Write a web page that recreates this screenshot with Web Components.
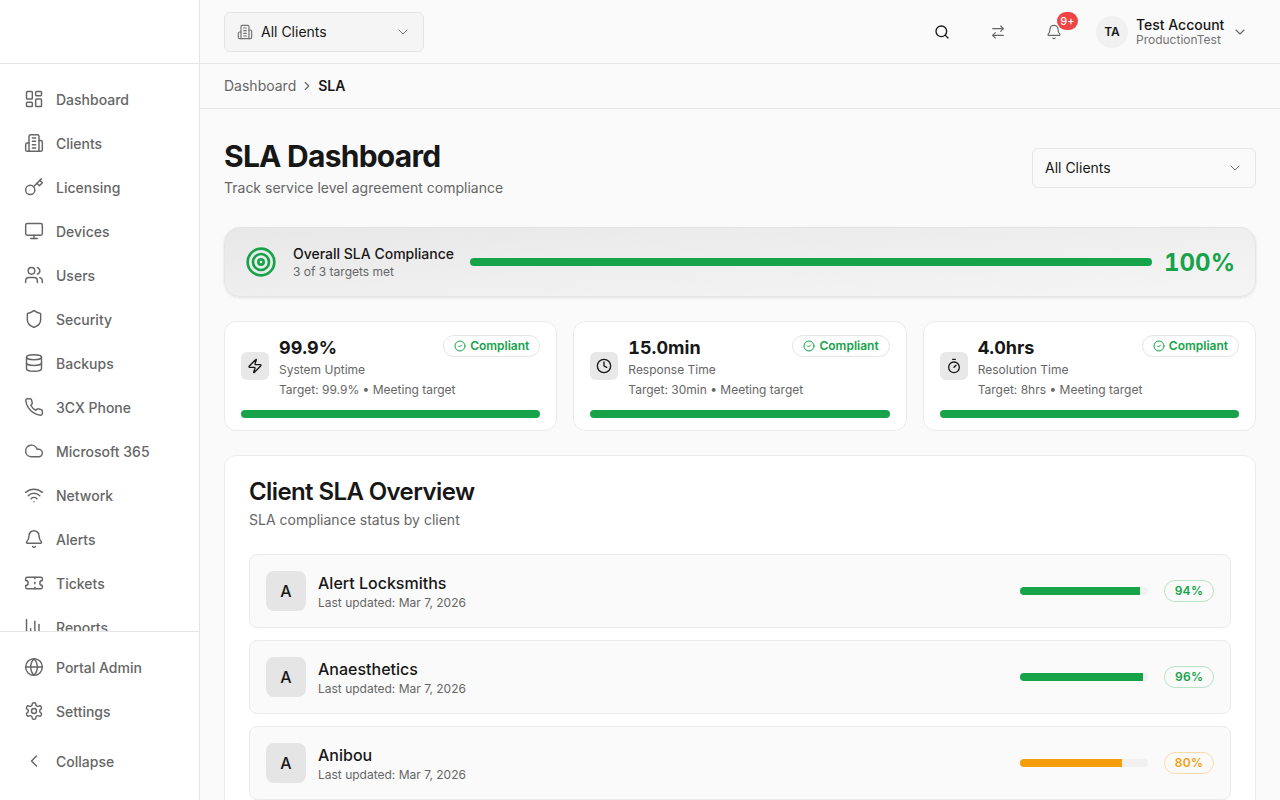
<!DOCTYPE html>
<html lang="en">
<head>
<meta charset="utf-8">
<title>SLA Dashboard</title>
<style>
  html, body { margin: 0; height: 100%; overflow: hidden; }
  body { font-family: Inter, "Liberation Sans", sans-serif; background: #fafafa; color: #171717; }
</style>
</head>
<body>
<app-shell>
  <app-sidebar slot="sidebar">
    <nav-item icon="dashboard">Dashboard</nav-item>
    <nav-item icon="building">Clients</nav-item>
    <nav-item icon="key">Licensing</nav-item>
    <nav-item icon="monitor">Devices</nav-item>
    <nav-item icon="users">Users</nav-item>
    <nav-item icon="shield">Security</nav-item>
    <nav-item icon="database">Backups</nav-item>
    <nav-item icon="phone">3CX Phone</nav-item>
    <nav-item icon="cloud">Microsoft 365</nav-item>
    <nav-item icon="wifi">Network</nav-item>
    <nav-item icon="bell">Alerts</nav-item>
    <nav-item icon="ticket">Tickets</nav-item>
    <nav-item icon="chart">Reports</nav-item>
    <nav-item slot="footer" icon="globe">Portal Admin</nav-item>
    <nav-item slot="footer" icon="settings">Settings</nav-item>
    <nav-item slot="collapse" icon="chevron-left">Collapse</nav-item>
  </app-sidebar>
  <app-topbar slot="topbar"></app-topbar>
  <app-breadcrumb slot="topbar"></app-breadcrumb>
  <page-header>
    <span slot="title">SLA Dashboard</span>
    <span slot="subtitle">Track service level agreement compliance</span>
  </page-header>
  <sla-summary title="Overall SLA Compliance" sub="3 of 3 targets met" value="100%"></sla-summary>
  <metric-grid>
    <metric-card icon="zap" value="99.9%" label="System Uptime" target="Target: 99.9% • Meeting target"></metric-card>
    <metric-card icon="clock" value="15.0min" label="Response Time" target="Target: 30min • Meeting target"></metric-card>
    <metric-card icon="timer" value="4.0hrs" label="Resolution Time" target="Target: 8hrs • Meeting target"></metric-card>
  </metric-grid>
  <client-overview>
    <client-row name="Alert Locksmiths" updated="Last updated: Mar 7, 2026" pct="94"></client-row>
    <client-row name="Anaesthetics" updated="Last updated: Mar 7, 2026" pct="96"></client-row>
    <client-row name="Anibou" updated="Last updated: Mar 7, 2026" pct="80"></client-row>
  </client-overview>
</app-shell>

<script>
const ICONS = {
  dashboard: '<rect width="7" height="9" x="3" y="3" rx="1"/><rect width="7" height="5" x="14" y="3" rx="1"/><rect width="7" height="9" x="14" y="12" rx="1"/><rect width="7" height="5" x="3" y="16" rx="1"/>',
  building: '<path d="M6 22V4a2 2 0 0 1 2-2h8a2 2 0 0 1 2 2v18Z"/><path d="M6 12H4a2 2 0 0 0-2 2v6a2 2 0 0 0 2 2h2"/><path d="M18 9h2a2 2 0 0 1 2 2v9a2 2 0 0 1-2 2h-2"/><path d="M10 6h4"/><path d="M10 10h4"/><path d="M10 14h4"/><path d="M10 18h4"/>',
  key: '<circle cx="7.5" cy="15.5" r="5.5"/><path d="m21 2-9.6 9.6"/><path d="m15.5 7.5 3 3L22 7l-3-3"/>',
  monitor: '<rect width="20" height="14" x="2" y="3" rx="2"/><line x1="8" x2="16" y1="21" y2="21"/><line x1="12" x2="12" y1="17" y2="21"/>',
  users: '<path d="M16 21v-2a4 4 0 0 0-4-4H6a4 4 0 0 0-4 4v2"/><circle cx="9" cy="7" r="4"/><path d="M22 21v-2a4 4 0 0 0-3-3.87"/><path d="M16 3.13a4 4 0 0 1 0 7.75"/>',
  shield: '<path d="M20 13c0 5-3.5 7.5-7.66 8.95a1 1 0 0 1-.67-.01C7.5 20.5 4 18 4 13V6a1 1 0 0 1 1-1c2 0 4.5-1.2 6.24-2.72a1.17 1.17 0 0 1 1.52 0C14.51 3.81 17 5 19 5a1 1 0 0 1 1 1z"/>',
  database: '<ellipse cx="12" cy="5" rx="9" ry="3"/><path d="M3 5V19A9 3 0 0 0 21 19V5"/><path d="M3 12A9 3 0 0 0 21 12"/>',
  phone: '<path d="M22 16.92v3a2 2 0 0 1-2.18 2 19.79 19.79 0 0 1-8.63-3.07 19.5 19.5 0 0 1-6-6 19.79 19.79 0 0 1-3.07-8.67A2 2 0 0 1 4.11 2h3a2 2 0 0 1 2 1.72 12.84 12.84 0 0 0 .7 2.81 2 2 0 0 1-.45 2.11L8.09 9.91a16 16 0 0 0 6 6l1.27-1.27a2 2 0 0 1 2.11-.45 12.84 12.84 0 0 0 2.81.7A2 2 0 0 1 22 16.92z"/>',
  cloud: '<path d="M17.5 19H9a7 7 0 1 1 6.71-9h1.79a4.5 4.5 0 1 1 0 9Z"/>',
  wifi: '<path d="M12 20h.01"/><path d="M2 8.82a15 15 0 0 1 20 0"/><path d="M5 12.859a10 10 0 0 1 14 0"/><path d="M8.5 16.429a5 5 0 0 1 7 0"/>',
  bell: '<path d="M10.268 21a2 2 0 0 0 3.464 0"/><path d="M3.262 15.326A1 1 0 0 0 4 17h16a1 1 0 0 0 .74-1.673C19.41 13.956 18 12.499 18 8A6 6 0 0 0 6 8c0 4.499-1.411 5.956-2.738 7.326"/>',
  ticket: '<path d="M2 9a3 3 0 0 1 0 6v2a2 2 0 0 0 2 2h16a2 2 0 0 0 2-2v-2a3 3 0 0 1 0-6V7a2 2 0 0 0-2-2H4a2 2 0 0 0-2 2Z"/><path d="M13 5v2"/><path d="M13 17v2"/><path d="M13 11v2"/>',
  chart: '<path d="M3 3v16a2 2 0 0 0 2 2h16"/><path d="M18 17V9"/><path d="M13 17V5"/><path d="M8 17v-3"/>',
  globe: '<circle cx="12" cy="12" r="10"/><path d="M12 2a14.5 14.5 0 0 0 0 20 14.5 14.5 0 0 0 0-20"/><path d="M2 12h20"/>',
  settings: '<path d="M12.22 2h-.44a2 2 0 0 0-2 2v.18a2 2 0 0 1-1 1.73l-.43.25a2 2 0 0 1-2 0l-.15-.08a2 2 0 0 0-2.73.73l-.22.38a2 2 0 0 0 .73 2.73l.15.1a2 2 0 0 1 1 1.72v.51a2 2 0 0 1-1 1.74l-.15.09a2 2 0 0 0-.73 2.73l.22.38a2 2 0 0 0 2.73.73l.15-.08a2 2 0 0 1 2 0l.43.25a2 2 0 0 1 1 1.73V20a2 2 0 0 0 2 2h.44a2 2 0 0 0 2-2v-.18a2 2 0 0 1 1-1.73l.43-.25a2 2 0 0 1 2 0l.15.08a2 2 0 0 0 2.73-.73l.22-.39a2 2 0 0 0-.73-2.73l-.15-.08a2 2 0 0 1-1-1.74v-.5a2 2 0 0 1 1-1.74l.15-.09a2 2 0 0 0 .73-2.73l-.22-.38a2 2 0 0 0-2.73-.73l-.15.08a2 2 0 0 1-2 0l-.43-.25a2 2 0 0 1-1-1.73V4a2 2 0 0 0-2-2z"/><circle cx="12" cy="12" r="3"/>',
  'chevron-left': '<path d="m15 18-6-6 6-6"/>',
  'chevron-right': '<path d="m9 18 6-6-6-6"/>',
  'chevron-down': '<path d="m6 9 6 6 6-6"/>',
  search: '<circle cx="11" cy="11" r="8"/><path d="m21 21-4.3-4.3"/>',
  swap: '<path d="m16 3 4 4-4 4"/><path d="M20 7H4"/><path d="m8 21-4-4 4-4"/><path d="M4 17h16"/>',
  target: '<circle cx="12" cy="12" r="10"/><circle cx="12" cy="12" r="6"/><circle cx="12" cy="12" r="2"/>',
  zap: '<path d="M4 14a1 1 0 0 1-.78-1.63l9.9-10.2a.5.5 0 0 1 .86.46l-1.92 6.02A1 1 0 0 0 13 10h7a1 1 0 0 1 .78 1.63l-9.9 10.2a.5.5 0 0 1-.86-.46l1.92-6.02A1 1 0 0 0 11 14z"/>',
  clock: '<circle cx="12" cy="12" r="10"/><polyline points="12 6 12 12 16 14"/>',
  timer: '<line x1="10" x2="14" y1="2" y2="2"/><line x1="12" x2="15" y1="14" y2="11"/><circle cx="12" cy="14" r="8"/>',
  check: '<circle cx="12" cy="12" r="10"/><path d="m9 12 2 2 4-4"/>'
};

class UiIcon extends HTMLElement {
  connectedCallback() {
    const size = this.getAttribute("size") || 20;
    if (!this.shadowRoot) this.attachShadow({mode: "open"});
    this.shadowRoot.innerHTML = `
      <style>
        :host { display: inline-flex; flex: none; width: ${size}px; height: ${size}px; }
        svg { display: block; }
      </style>
      <svg xmlns="http://www.w3.org/2000/svg" width="${size}" height="${size}" viewBox="0 0 24 24" fill="none"
        stroke="currentColor" stroke-width="${this.getAttribute("stroke") || 2}" stroke-linecap="round" stroke-linejoin="round">${ICONS[this.getAttribute("name")]}</svg>`;
  }
}
customElements.define("ui-icon", UiIcon);

class AppShell extends HTMLElement {
  constructor() {
    super();
    this.attachShadow({mode: "open"}).innerHTML = `
      <style>
        :host { display: flex; height: 800px; overflow: hidden; }
        .main { flex: 1; min-width: 0; display: flex; flex-direction: column; }
        .content { flex: 1; min-height: 0; overflow: hidden; padding: 29px 24px 24px; display: flex; flex-direction: column; gap: 24px; }
        ::slotted(page-header) { margin-bottom: 5px; }
      </style>
      <slot name="sidebar"></slot>
      <div class="main">
        <slot name="topbar"></slot>
        <div class="content"><slot></slot></div>
      </div>`;
  }
}
customElements.define("app-shell", AppShell);

class AppSidebar extends HTMLElement {
  constructor() {
    super();
    this.attachShadow({mode: "open"}).innerHTML = `
      <style>
        :host { display: flex; flex-direction: column; flex: none; box-sizing: border-box; width: 200px; height: 800px; background: #fff; border-right: 1px solid #e5e5e5; }
        .logo { flex: none; height: 63px; border-bottom: 1px solid #e5e5e5; }
        nav { flex: 1; min-height: 0; overflow: hidden; padding: 17px 0 0; display: flex; flex-direction: column; gap: 8px; }
        .foot { flex: none; border-top: 1px solid #e5e5e5; padding: 17px 0 21px; display: flex; flex-direction: column; gap: 8px; }
        .collapse { margin-top: 6px; }
      </style>
      <div class="logo"></div>
      <nav><slot></slot></nav>
      <div class="foot">
        <slot name="footer"></slot>
        <div class="collapse"><slot name="collapse"></slot></div>
      </div>`;
  }
}
customElements.define("app-sidebar", AppSidebar);

class NavItem extends HTMLElement {
  constructor() {
    super();
    this.attachShadow({mode: "open"}).innerHTML = `
      <style>
        :host { display: flex; flex: none; align-items: center; gap: 12px; height: 36px; padding: 0 24px; font-size: 14px; font-weight: 500; color: #666; }
      </style>
      <ui-icon name="${this.getAttribute("icon")}" size="20" stroke="1.75"></ui-icon>
      <span><slot></slot></span>`;
  }
}
customElements.define("nav-item", NavItem);

class AppTopbar extends HTMLElement {
  constructor() {
    super();
    this.attachShadow({mode: "open"}).innerHTML = `
      <style>
        :host { display: flex; flex: none; align-items: center; justify-content: space-between; box-sizing: border-box; height: 64px; padding: 0 24px; border-bottom: 1px solid #e5e5e5; }
        .select { display: flex; align-items: center; box-sizing: border-box; width: 200px; height: 40px; padding: 0 12px; gap: 8px; background: #f5f5f5; border: 1px solid #e5e5e5; border-radius: 6px; font-size: 14px; color: #171717; }
        .select span { flex: 1; }
        .select ui-icon { color: #737373; }
        .right { display: flex; align-items: center; gap: 16px; }
        .btn { position: relative; display: flex; align-items: center; justify-content: center; width: 40px; height: 40px; }
        .badge { position: absolute; left: 23px; top: 0; display: flex; align-items: center; justify-content: center; width: 21px; height: 18px; border-radius: 9px; background: #ef4444; color: #fff; font-size: 11px; font-weight: 500; }
        .user { display: flex; align-items: center; gap: 8px; padding: 0 8px 0 6px; }
        .avatar { display: flex; align-items: center; justify-content: center; width: 32px; height: 32px; border-radius: 50%; background: #f0f0f0; font-size: 12px; font-weight: 600; }
        .who { display: flex; flex-direction: column; width: 88px; }
        .name { font-size: 14px; font-weight: 500; line-height: 16px; white-space: nowrap; }
        .org { font-size: 12px; color: #737373; line-height: 14px; white-space: nowrap; }
      </style>
      <div class="select">
        <ui-icon name="building" size="16" stroke="1.75"></ui-icon>
        <span>All Clients</span>
        <ui-icon name="chevron-down" size="16" stroke="1.5"></ui-icon>
      </div>
      <div class="right">
        <div class="btn" style="color:#171717"><ui-icon name="search" size="16"></ui-icon></div>
        <div class="btn" style="color:#666"><ui-icon name="swap" size="16" stroke="1.75"></ui-icon></div>
        <div class="btn" style="color:#666"><ui-icon name="bell" size="16" stroke="1.75"></ui-icon><span class="badge">9+</span></div>
        <div class="user">
          <div class="avatar">TA</div>
          <div class="who"><span class="name">Test Account</span><span class="org">ProductionTest</span></div>
          <ui-icon name="chevron-down" size="16" stroke="1.75" style="color:#666"></ui-icon>
        </div>
      </div>`;
  }
}
customElements.define("app-topbar", AppTopbar);

class AppBreadcrumb extends HTMLElement {
  constructor() {
    super();
    this.attachShadow({mode: "open"}).innerHTML = `
      <style>
        :host { display: flex; flex: none; align-items: center; gap: 4px; box-sizing: border-box; height: 45px; padding: 0 24px 1px; border-bottom: 1px solid #e5e5e5; font-size: 14px; color: #666; }
        b { font-weight: 600; color: #171717; }
        ui-icon { color: #666; }
      </style>
      <span>Dashboard</span>
      <ui-icon name="chevron-right" size="14"></ui-icon>
      <b>SLA</b>`;
  }
}
customElements.define("app-breadcrumb", AppBreadcrumb);

class PageHeader extends HTMLElement {
  constructor() {
    super();
    this.attachShadow({mode: "open"}).innerHTML = `
      <style>
        :host { display: flex; flex: none; align-items: center; justify-content: space-between; }
        h1 { margin: 0 0 4px; font-size: 30px; line-height: 36px; font-weight: 700; letter-spacing: -0.75px; color: #171717; }
        p { margin: 0; font-size: 14px; line-height: 20px; color: #666; }
        .select { display: flex; align-items: center; justify-content: space-between; box-sizing: border-box; width: 224px; height: 40px; padding: 0 12px 1px; background: #fafafa; border: 1px solid #e5e5e5; border-radius: 6px; font-size: 14px; color: #171717; }
        .select ui-icon { color: #737373; }
      </style>
      <div>
        <h1><slot name="title"></slot></h1>
        <p><slot name="subtitle"></slot></p>
      </div>
      <div class="select"><span>All Clients</span><ui-icon name="chevron-down" size="16" stroke="1.5"></ui-icon></div>`;
  }
}
customElements.define("page-header", PageHeader);

class ProgressBar extends HTMLElement {
  connectedCallback() {
    if (!this.shadowRoot) this.attachShadow({mode: "open"});
    this.shadowRoot.innerHTML = `
      <style>
        :host { display: block; height: 8px; border-radius: 4px; background: #f0f0f0; overflow: hidden; }
        div { height: 100%; width: ${this.getAttribute("value")}%; background: ${this.getAttribute("color") || "#16a34a"}; }
      </style>
      <div></div>`;
  }
}
customElements.define("progress-bar", ProgressBar);

class SlaSummary extends HTMLElement {
  constructor() {
    super();
    this.attachShadow({mode: "open"}).innerHTML = `
      <style>
        :host { display: flex; flex: none; align-items: center; box-sizing: border-box; height: 70px; padding: 0 20px; border: 1px solid #e5e5e5; border-radius: 16px; background: linear-gradient(to bottom right, #e8e8e8, #f5f5f5); box-shadow: 0 1px 3px rgba(0,0,0,.1); }
        ui-icon { color: #16a34a; margin-right: 16px; }
        .text { flex: none; margin-right: 16px; }
        .t { font-size: 14px; font-weight: 500; line-height: 20px; color: #171717; }
        .s { font-size: 12px; line-height: 16px; color: #666; }
        progress-bar { flex: 1; }
        .v { flex: none; margin-left: 12px; padding-top: 2px; font-size: 24px; line-height: 32px; font-weight: 700; color: #16a34a; font-variant-numeric: tabular-nums; }
      </style>
      <ui-icon name="target" size="32"></ui-icon>
      <div class="text">
        <div class="t">${this.getAttribute("title")}</div>
        <div class="s">${this.getAttribute("sub")}</div>
      </div>
      <progress-bar value="100"></progress-bar>
      <div class="v">${this.getAttribute("value")}</div>`;
  }
}
customElements.define("sla-summary", SlaSummary);

class MetricGrid extends HTMLElement {
  constructor() {
    super();
    this.attachShadow({mode: "open"}).innerHTML = `
      <style>
        :host { display: grid; flex: none; grid-template-columns: repeat(3, 1fr); gap: 16px; }
      </style>
      <slot></slot>`;
  }
}
customElements.define("metric-grid", MetricGrid);

class MetricCard extends HTMLElement {
  constructor() {
    super();
    this.attachShadow({mode: "open"}).innerHTML = `
      <style>
        :host { display: block; box-sizing: border-box; height: 110px; padding: 16px; background: #fff; border: 1px solid #ebebeb; border-radius: 12px; }
        .top { position: relative; display: flex; align-items: center; gap: 10px; height: 56px; margin-bottom: 16px; }
        .ico { display: flex; align-items: center; justify-content: center; width: 28px; height: 28px; border-radius: 6px; background: #e8e8e8; color: #171717; }
        .text { padding-top: 2px; }
        .v { font-size: 18px; font-weight: 700; line-height: 24px; color: #171717; font-variant-numeric: tabular-nums; }
        .l, .g { font-size: 12px; line-height: 16px; color: #666; white-space: nowrap; }
        .l { margin-top: 2px; }
        .g { margin-top: 4px; }
        .badge { position: absolute; right: 0; top: -3px; display: flex; align-items: center; gap: 4px; box-sizing: border-box; height: 22px; padding: 0 10px 1px; background: #fff; border: 1px solid #e5e5e5; border-radius: 11px; font-size: 12px; font-weight: 600; color: #16a34a; }
      </style>
      <div class="top">
        <div class="ico"><ui-icon name="${this.getAttribute("icon")}" size="16"></ui-icon></div>
        <div class="text">
          <div class="v">${this.getAttribute("value")}</div>
          <div class="l">${this.getAttribute("label")}</div>
          <div class="g">${this.getAttribute("target")}</div>
        </div>
        <div class="badge"><ui-icon name="check" size="12"></ui-icon>Compliant</div>
      </div>
      <progress-bar value="100"></progress-bar>`;
  }
}
customElements.define("metric-card", MetricCard);

class ClientOverview extends HTMLElement {
  constructor() {
    super();
    this.attachShadow({mode: "open"}).innerHTML = `
      <style>
        :host { display: block; flex: none; padding: 24px; background: #fff; border: 1px solid #ebebeb; border-radius: 12px; }
        h2 { margin: 0 0 6px; font-size: 24px; line-height: 24px; font-weight: 600; letter-spacing: -0.6px; color: #171717; }
        p { margin: 0 0 24px; font-size: 14px; line-height: 20px; color: #666; }
        .rows { display: flex; flex-direction: column; gap: 12px; }
      </style>
      <h2>Client SLA Overview</h2>
      <p>SLA compliance status by client</p>
      <div class="rows"><slot></slot></div>`;
  }
}
customElements.define("client-overview", ClientOverview);

class ClientRow extends HTMLElement {
  constructor() {
    super();
    const pct = Number(this.getAttribute("pct"));
    const color = pct >= 90 ? "#16a34a" : "#f59e0b";
    const edge = pct >= 90 ? "#bbe3c8" : "#fcdcaa";
    const name = this.getAttribute("name");
    this.attachShadow({mode: "open"}).innerHTML = `
      <style>
        :host { display: flex; align-items: center; box-sizing: border-box; height: 74px; padding: 0 16px; background: #fafafa; border: 1px solid #ebebeb; border-radius: 8px; }
        .av { display: flex; align-items: center; justify-content: center; flex: none; width: 40px; height: 40px; margin-right: 12px; border-radius: 8px; background: #e5e5e5; font-size: 16px; font-weight: 500; color: #171717; }
        .info { flex: 1; padding-top: 2px; }
        .n { font-size: 16px; font-weight: 500; line-height: 20px; color: #171717; }
        .u { margin-top: 2px; font-size: 12px; line-height: 16px; color: #666; }
        progress-bar { flex: none; width: 128px; margin-right: 16px; }
        .pct { flex: none; display: flex; align-items: center; box-sizing: border-box; height: 22px; padding: 0 9.75px 1px; border: 1px solid ${edge}; border-radius: 11px; font-size: 12px; font-weight: 600; letter-spacing: .3px; color: ${color}; }
      </style>
      <div class="av">${name[0]}</div>
      <div class="info">
        <div class="n">${name}</div>
        <div class="u">${this.getAttribute("updated")}</div>
      </div>
      <progress-bar value="${pct}" color="${color}"></progress-bar>
      <div class="pct">${pct}%</div>`;
  }
}
customElements.define("client-row", ClientRow);
</script>
</body>
</html>
